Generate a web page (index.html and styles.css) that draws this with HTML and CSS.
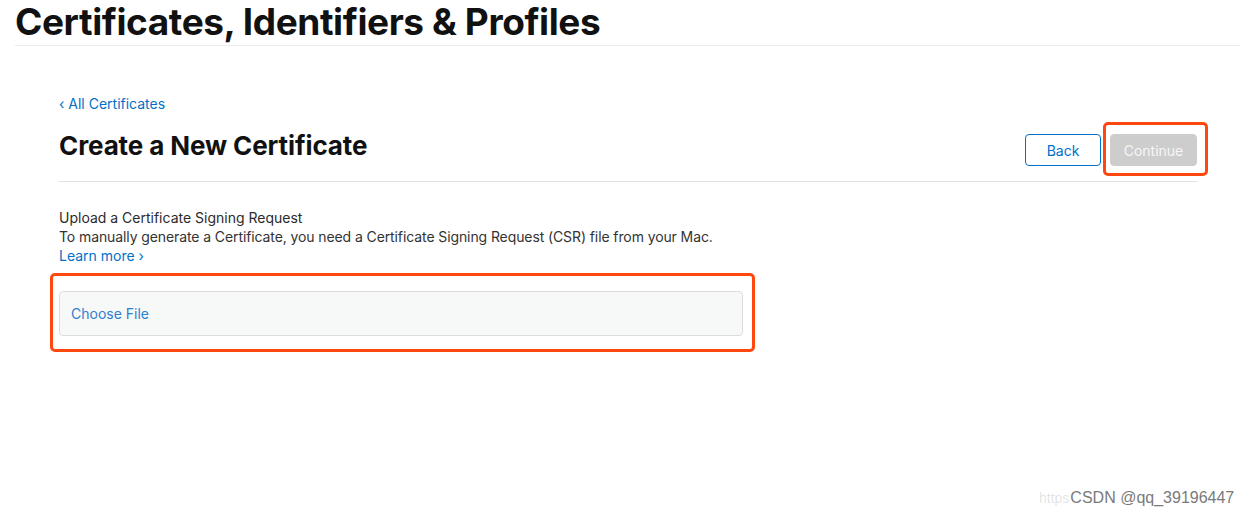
FILE: index.html
```html
<!DOCTYPE html>
<html lang="en">
<head>
<meta charset="utf-8">
<title>Certificates, Identifiers &amp; Profiles</title>
<link rel="stylesheet" href="styles.css">
</head>
<body>
<header class="page-header">
  <h1 class="page-title">Certificates, Identifiers &amp; Profiles</h1>
</header>
<main class="content">
  <a class="back-link" href="#">&#8249; All Certificates</a>
  <div class="title-row">
    <h2 class="section-title">Create a New Certificate</h2>
    <div class="actions">
      <button class="btn btn-back" type="button">Back</button>
      <span class="highlight-wrap">
        <button class="btn btn-continue" type="button" disabled>Continue</button>
        <span class="highlight highlight-continue"></span>
      </span>
    </div>
  </div>
  <section class="upload">
    <p class="upload-title">Upload a Certificate Signing Request</p>
    <p class="upload-desc">To manually generate a Certificate, you need a Certificate Signing Request (CSR) file from your Mac.</p>
    <a class="learn-more" href="#">Learn more &#8250;</a>
    <div class="file-wrap">
      <div class="file-box"><span class="choose-file">Choose File</span></div>
      <span class="highlight highlight-file"></span>
    </div>
  </section>
</main>
<div class="watermark">
  <span class="wm-url">https</span>
  <span class="wm-name">CSDN @qq_39196447</span>
</div>
</body>
</html>
```

FILE: styles.css
```css
* { box-sizing: border-box; }
html, body { margin: 0; padding: 0; background: #fff; }
body {
  width: 1254px;
  height: 516px;
  overflow: hidden;
  position: relative;
  font-family: Inter, "Liberation Sans", sans-serif;
  color: #333;
}
.page-header {
  margin: 0 14px 0 15px;
  border-bottom: 1px solid #ebebeb;
  height: 46px;
}
.page-title {
  margin: 0;
  font-size: 37px;
  font-weight: 700;
  letter-spacing: -0.4px;
  line-height: 46px;
  color: #111;
  position: relative;
  top: -1px;
}
.content {
  margin-left: 59px;
  width: 1138px;
  padding-top: 49px;
}
.back-link {
  display: block;
  font-size: 14px;
  line-height: 18px;
  color: #0070c9;
  text-decoration: none;
}
.title-row {
  display: flex;
  align-items: flex-start;
  justify-content: space-between;
  height: 56px;
  margin-top: 13px;
  border-bottom: 1px solid #e2e2e2;
}
.section-title {
  margin: 4px 0 0;
  font-size: 26px;
  line-height: 32px;
  font-weight: 700;
  color: #111;
  letter-spacing: -0.1px;
}
.actions {
  display: flex;
  gap: 9px;
  align-items: center;
  margin-top: 8px;
}
.btn {
  height: 32px;
  border-radius: 4px;
  font-family: inherit;
  font-size: 14px;
  padding: 0;
}
.btn-back {
  width: 76px;
  background: #fff;
  border: 1px solid #0070c9;
  color: #0070c9;
}
.btn-continue {
  width: 87px;
  background: #cdcdcd;
  border: 1px solid #cdcdcd;
  color: #f6f6f6;
}
.highlight-wrap { position: relative; display: inline-block; height: 32px; }
.highlight {
  position: absolute;
  border: 3px solid #ff4810;
  border-radius: 5px;
  pointer-events: none;
}
.highlight-continue {
  left: -7px;
  right: -11px;
  top: -12px;
  bottom: -10px;
}
.upload { padding-top: 26px; }
.upload-title, .upload-desc {
  margin: 0;
  font-size: 14px;
  line-height: 19px;
  color: #333;
}
.upload-title { color: #2b2b2b; }
.upload-desc { letter-spacing: -0.1px; }
.learn-more {
  display: block;
  font-size: 14px;
  line-height: 20px;
  color: #0070c9;
  text-decoration: none;
}
.file-wrap {
  position: relative;
  width: 684px;
  margin-top: 25px;
}
.file-box {
  height: 45px;
  background: #f7f8f8;
  border: 1px solid #dcdcdc;
  border-radius: 4px;
  display: flex;
  align-items: center;
  padding-left: 11px;
}
.choose-file {
  font-size: 14px;
  color: #2f7fd0;
}
.highlight-file {
  left: -9px;
  right: -12px;
  top: -18px;
  bottom: -16px;
}
.watermark {
  position: absolute;
  left: 1039px;
  top: 488px;
  display: flex;
  align-items: baseline;
  gap: 1px;
  font-family: "Liberation Sans", sans-serif;
  line-height: 20px;
  white-space: nowrap;
}
.wm-url {
  font-size: 14px;
  color: rgba(0,0,0,0.13);
}
.wm-name {
  font-size: 16px;
  color: #7a7a7a;
  text-shadow: 0 0 2px #fff, 0 0 2px #fff;
}
```
